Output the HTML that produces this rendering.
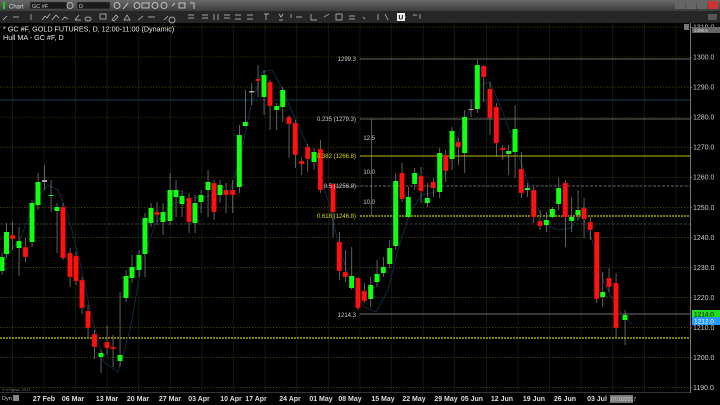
<!DOCTYPE html>
<html><head><meta charset="utf-8"><style>
html,body{margin:0;padding:0;background:#000;width:720px;height:405px;overflow:hidden;font-family:"Liberation Sans",sans-serif}
</style></head><body>
<svg id="s" width="720" height="405" xmlns="http://www.w3.org/2000/svg" style="position:absolute;left:0;top:0">
<defs><linearGradient id="tb" x1="0" y1="0" x2="0" y2="1"><stop offset="0" stop-color="#6a6a6a"/><stop offset="1" stop-color="#3c3c3c"/></linearGradient></defs>
<rect x="0" y="0" width="720" height="405" fill="#000"/>
<rect x="0" y="0" width="720" height="11" fill="url(#tb)"/>
<rect x="0" y="11" width="720" height="12" fill="#262626"/>
<rect x="3" y="2" width="2" height="7" fill="#2c2"/>
<text x="9" y="8.5" font-size="6" fill="#ddd">Chart</text>
<rect x="30" y="2" width="37" height="7" fill="#1a1a1a" stroke="#555" stroke-width="0.5"/>
<text x="32" y="8" font-size="5.5" fill="#ccc">GC #F</text>
<circle cx="70" cy="5.5" r="3" fill="none" stroke="#ccc" stroke-width="0.8"/>
<rect x="77" y="2" width="33" height="7" fill="#1a1a1a" stroke="#555" stroke-width="0.5"/>
<text x="79" y="8" font-size="5.5" fill="#ccc">D</text>
<g fill="none" stroke="#ddd" stroke-width="0.8"><circle cx="117" cy="5.5" r="3"/><circle cx="137" cy="5.5" r="3"/><circle cx="155" cy="5.5" r="3"/><circle cx="164" cy="5.5" r="3"/><rect x="142" y="3" width="7" height="5"/><rect x="179" y="3" width="6" height="5"/><path d="M123 9l5-6M172 6l3-3M190 3l4 0 0 6"/></g>
<g fill="none" stroke="#ccc" stroke-width="0.7"><path d="M3 20l4-4M13 17h6M31 14v6M42 20l3-4 2 2 3-4M52 20l4-5 3 3M62 20l3-3 3 2M75 20l4-5M75 20h6M88 17a3 2 0 1 0 .1 0M100 14h6v5h-6zM112 20l4-5 2 2-4 4zM124 20l3-5 3 5zM138 20l5-4M148 17h7M164 20l4-4M172 17a3 3 0 1 0 .1 0M188 15h6M188 18h6M202 15h6M202 18h6M214 14v6M218 14v6M224 15h6M224 18h6M235 15h6M235 19h6M247 15h6M247 19h6M264 14h5M266 14v6M279 14l2 3 2-3M279 20h4M291 14v4M296 17h6M311 14v6h6M324 17l5-3M336 14h6v6h-6zM349 16h6M349 19h6M363 17l2 2M378 14v6M385 14l3 6M402 17h4M413 15h4M420 14v5"/></g>
<rect x="397" y="13" width="8" height="8" fill="#eee"/><text x="398.5" y="19.5" font-size="6.5" fill="#000" font-weight="bold">U</text>
<rect x="708" y="14" width="9" height="6" fill="#555"/>
<rect x="675" y="1" width="10" height="8" fill="#666"/><rect x="686" y="1" width="10" height="8" fill="#666"/><rect x="697" y="1" width="10" height="8" fill="#666"/><rect x="708" y="1" width="10" height="8" fill="#c33"/>
<g id="grid"></g>
<g id="lev"></g>
<path id="hma" fill="none" stroke="#122a42" stroke-width="1" d="M0 262 L20 240 L35 200 L48 185 L58 190 L68 215 L80 262 L92 318 L104 362 L118 372 L130 330 L142 262 L155 225 L170 205 L185 200 L200 197 L215 195 L230 190 L240 160 L250 110 L262 72 L272 70 L282 88 L292 112 L305 140 L315 160 L328 200 L340 250 L352 285 L364 307 L376 312 L388 290 L398 250 L410 212 L422 195 L435 192 L448 168 L460 130 L470 110 L480 85 L490 82 L502 110 L512 138 L522 165 L534 200 L546 225 L558 230 L570 228 L582 215 L592 240 L604 282 L615 305 L627 320 L632 324"/>
<g id="c"></g>
<rect x="690" y="23" width="1" height="370" fill="#777"/>
<rect x="0" y="392" width="690" height="1" fill="#333"/>
<g font-size="7" fill="#ccc" id="ax"></g>
<text x="2" y="391" font-size="4" fill="#777">© eSignal, 2017</text>
<text x="2" y="400" font-size="5.5" fill="#ccc">Dyn</text><rect x="13" y="395" width="6" height="6" fill="#888"/>
<g font-size="7" fill="#ddd" font-weight="bold" text-anchor="middle" id="dates"></g>
<rect x="610" y="395" width="23" height="8" fill="#777"/><text x="611" y="401" font-size="5" fill="#ddd">07/10/2017</text>
<text x="3" y="31.5" font-size="7.2" fill="#e8e8e8">* GC #F, GOLD FUTURES, D, 12:00-11:00 (Dynamic)</text>
<text x="3" y="40" font-size="7.2" fill="#e8e8e8">Hull MA - GC #F, D</text>
<g font-size="6" fill="#ccc" text-anchor="end">
<text x="356" y="61">1299.3</text>
<text x="356" y="121">0.235 (1279.3)</text>
<text x="356" y="158" fill="#dd0">0.382 (1266.8)</text>
<text x="356" y="188">0.5 (1256.8)</text>
<text x="356" y="218" fill="#dd0">0.618 (1246.8)</text>
<text x="356" y="317">1214.3</text>
<text x="375" y="140">12.5</text><text x="375" y="174">10.0</text><text x="375" y="204">10.0</text>
</g>
<rect x="371" y="119" width="0.6" height="97" fill="#888"/>
<rect x="692" y="310" width="28" height="8" fill="#2d2"/><text x="694" y="316.5" font-size="6.5" fill="#000">1214.0</text>
<rect x="692" y="317" width="28" height="8" fill="#29f"/><text x="694" y="323.5" font-size="6.5" fill="#fff">1212.0</text>
<rect x="692" y="27" width="28" height="6" fill="#666"/><text x="694" y="32" font-size="4.5" fill="#ddd">1308.5</text>
<rect x="684" y="24" width="5" height="6" fill="#777"/>
</svg>
<script>
var NS="http://www.w3.org/2000/svg";
function el(p,t,a,txt){var e=document.createElementNS(NS,t);for(var k in a)e.setAttribute(k,a[k]);if(txt)e.textContent=txt;document.getElementById(p).appendChild(e);}
function Y(p){return 57+(1300-p)*3.006;}
for(var x=12;x<690;x+=31.6)el("grid","rect",{x:x,y:23,width:0.7,height:369,fill:"#0d2a0d"});
for(var p=1310;p>=1190;p-=10){var y=Y(p);el("grid","line",{x1:0,y1:y,x2:690,y2:y,stroke:"#5a5a00","stroke-width":0.6,"stroke-dasharray":"1.5,1.5"});el("ax","text",{x:693,y:y+2.5},p.toFixed(1));el("ax","rect",{x:690,y:y,width:2,height:0.7,fill:"#888"});}
el("lev","line",{x1:360,y1:59,x2:690,y2:59,stroke:"#888","stroke-width":0.8});
el("lev","line",{x1:0,y1:100,x2:690,y2:100,stroke:"#1c4a78","stroke-width":0.8});
el("lev","line",{x1:360,y1:119,x2:690,y2:119,stroke:"#888","stroke-width":0.8});
el("lev","line",{x1:360,y1:156,x2:690,y2:156,stroke:"#bb0","stroke-width":1});
el("lev","line",{x1:320,y1:186,x2:690,y2:186,stroke:"#888","stroke-width":0.8,"stroke-dasharray":"3,1.5"});
el("lev","line",{x1:360,y1:216,x2:690,y2:216,stroke:"#cc0","stroke-width":1.2,"stroke-dasharray":"2,1"});
el("lev","line",{x1:0,y1:224,x2:690,y2:224,stroke:"#777","stroke-width":0.6,"stroke-dasharray":"3,1.5"});
el("lev","line",{x1:360,y1:314,x2:690,y2:314,stroke:"#999","stroke-width":0.8});
el("lev","line",{x1:0,y1:338,x2:690,y2:338,stroke:"#cc0","stroke-width":1.2,"stroke-dasharray":"2,1"});
var C=[[2,257,271,252,275,1],[6.5,232,254,223,258,1],[12.5,235,239,222,250,0],[19,241,248,227,276,1],[25.5,247,257,238,262,0],[32,203,242,200,247,1],[38,182,205,173,210,1],[44.5,180,182,165,190,2],[51,195,196,180,212,1],[57,207,211,203,253,1],[63,207,258,203,260,0],[70,253,277,248,287,0],[76,256,281,252,285,0],[82,280,308,277,314,0],[88,311,328,305,337,0],[94.5,334,347,330,359,0],[101,353,357,350,373,1],[107,342,348,325,355,0],[113,347,349,335,367,0],[120,355,361,292,367,1],[126,276,298,270,302,1],[132,267,278,255,283,1],[139,255,270,250,277,1],[145,218,254,213,277,1],[151,208,223,203,227,1],[157,212,215,202,225,0],[163,212,222,203,235,1],[170,190,221,173,225,1],[176,190,197,180,217,1],[182,196,204,190,217,1],[189,198,222,193,233,0],[195,203,223,195,233,1],[201,195,202,190,213,1],[208,182,190,170,217,1],[214,183,212,180,220,0],[220,185,195,180,203,1],[226,190,195,183,213,0],[232.7,190,195,180,213,0],[239.3,135,187,125,193,1],[245.3,122,126,90,127,1],[251.7,91,92.5,83,105,2],[258,79,81,65,97,0],[264,75,97,70,115,1],[270,82,106,80,130,0],[276.7,106,110,103,130,1],[282.7,90,107,87,122,1],[289,117,124,115,158,0],[295.3,123,155,120,168,0],[301.7,161,164,157,175,0],[307.7,147,159,144,172,0],[314,152,162,148,170,1],[320.3,149,190,140,193,0],[333,184,212,183,237,0],[339.3,242,271,232,280,0],[345.3,272,277,250,282,0],[351.7,276,288,247,290,1],[358,278,308,277,310,0],[364.3,291,301,283,303,0],[370.7,285,299,277,307,1],[377,274,282,260,287,1],[383.3,267,273,257,277,1],[389.7,248,264,240,268,1],[395.7,181,246,173,250,1],[402,173,199,163,202,0],[408.3,197,217,187,218,1],[414.7,173,184,168,190,1],[421,176,191,167,203,0],[427.3,198,203,183,207,1],[433.3,182,188,178,197,0],[439.7,153,192,148,198,1],[445.7,155,171,150,182,0],[452,131,159,127,170,1],[458.3,142,147,138,165,0],[464.7,117,153,110,173,1],[471,109,110,100,117,2],[477.3,65,109,60,113,1],[483.7,66,77,65,102,0],[490,89,118,82,135,0],[496.3,107,143,103,157,0],[502.7,148,150,145,160,0],[508.7,151,154,145,175,1],[515,129,152,105,178,1],[521.3,169,193,152,198,0],[527.3,188,190,183,197,1],[533.7,190,217,187,223,0],[540,221,226,210,230,0],[546.3,220,225,212,232,1],[552.3,209,217,207,218,1],[558.7,188,204,178,210,1],[565.3,183,217,180,247,0],[571.7,217,221,197,232,1],[578,210,215,190,220,1],[584,208,219,198,238,0],[590.3,222,230,217,240,0],[596.7,232,299,232,303,0],[602.7,292,297,272,307,1],[609,278,287,268,292,0],[616,283,328,273,337,0],[625,315,320,310,345,1]];
C.forEach(function(c){var col=c[5]==1?"#1f1":c[5]==0?"#f11":"#aaa";el("c","rect",{x:c[0]-0.3,y:c[3],width:0.7,height:c[4]-c[3],fill:"#888"});el("c","rect",{x:c[0]-2.5,y:c[1],width:5,height:Math.max(1,c[2]-c[1]),fill:col,stroke:"#600","stroke-width":c[5]==0?0.3:0});});
var D=[["27 Feb",44],["06 Mar",73],["13 Mar",107],["20 Mar",138],["27 Mar",170],["03 Apr",199],["10 Apr",231],["17 Apr",256],["24 Apr",290],["01 May",321],["08 May",350],["15 May",383],["22 May",414],["29 May",446],["05 Jun",472],["12 Jun",502],["19 Jun",534],["26 Jun",565],["03 Jul",597]];
D.forEach(function(d){el("dates","text",{x:d[1],y:401},d[0]);});
</script>
</body></html>
